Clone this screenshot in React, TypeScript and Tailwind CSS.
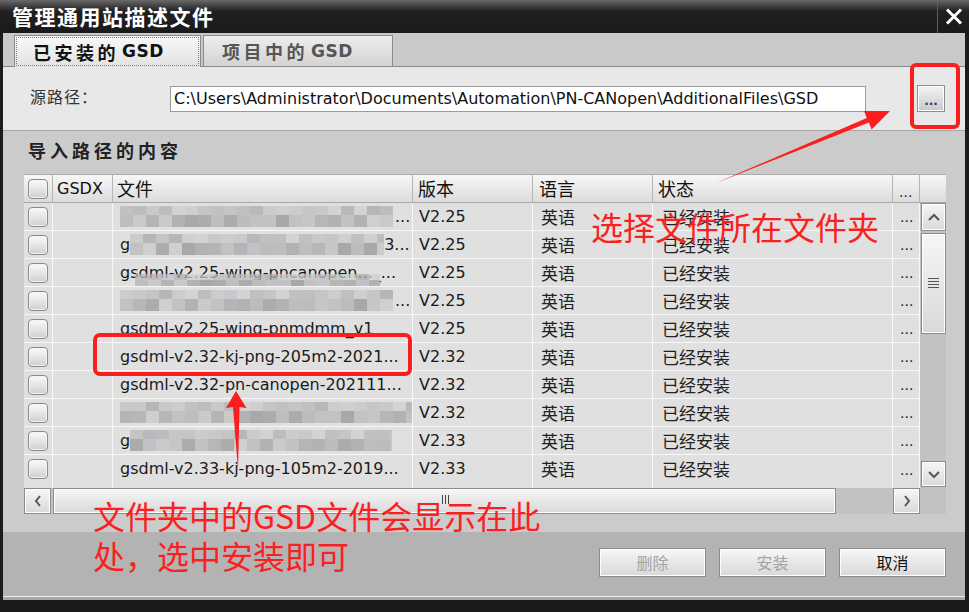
import React from "react";

const PAL = [
  "#c6c6c6", "#bcbcbc", "#b2b2b2", "#c2c2c2", "#acacac", "#cacaca",
  "#b9b7b4", "#bfc2c6", "#a8a8a8", "#bebebe", "#b5b5b5", "#cfcfcf",
];

function Mosaic({ w, seed, h1 = 9, h2 = 12 }: { w: number; seed: number; h1?: number; h2?: number }) {
  const n = Math.ceil(w / 13);
  const cells = (row: number) =>
    Array.from({ length: n }, (_, i) => PAL[(i * 7 + seed * 5 + row * 3 + ((i * i + seed) % 5)) % PAL.length]);
  return (
    <div className="inline-flex flex-col overflow-hidden blur-[0.6px] shrink-0" style={{ width: w }}>
      <div className="flex" style={{ height: h1 }}>
        {cells(0).map((c, i) => (
          <div key={i} className="w-[13px] shrink-0 opacity-75" style={{ background: c }} />
        ))}
      </div>
      <div className="flex" style={{ height: h2 }}>
        {cells(1).map((c, i) => (
          <div key={i} className="w-[13px] shrink-0" style={{ background: c }} />
        ))}
      </div>
    </div>
  );
}

function Check() {
  return (
    <div className="w-[20px] h-[20px] rounded-[4px] border-[1.5px] border-[#8a8a8a] bg-gradient-to-b from-[#fbfbfb] to-[#cfcfcf] shadow-[inset_0_0_0_1px_#f4f4f4]" />
  );
}

function SBtn({ children, className = "" }: { children?: React.ReactNode; className?: string }) {
  return (
    <div
      className={
        "border border-[#8c8c8c] bg-gradient-to-b from-[#f6f6f6] to-[#d9d9d9] shadow-[inset_0_0_0_1px_#ffffff] flex items-center justify-center " +
        className
      }
    >
      {children}
    </div>
  );
}

const GRID = "grid grid-cols-[29px_60px_300px_120px_120px_240px_27px]";

type Row = { file: React.ReactNode; ver: string };

const rows: Row[] = [
  { file: (<><Mosaic w={273} seed={1} /><span className="ml-[2px]">...</span></>), ver: "V2.25" },
  { file: (<><span>g</span><Mosaic w={254} seed={2} /><span>3...</span></>), ver: "V2.25" },
  {
    file: (
      <>
        <span>gsdml-v2.25-wing-pncanopen..._...</span>
        <div className="absolute left-[22px] top-[4px]">
          <Mosaic w={245} seed={3} h1={6} h2={8} />
        </div>
      </>
    ),
    ver: "V2.25",
  },
  { file: (<><Mosaic w={273} seed={4} /><span className="ml-[2px]">...</span></>), ver: "V2.25" },
  { file: <span>gsdml-v2.25-wing-pnmdmm_v1</span>, ver: "V2.25" },
  { file: <span>gsdml-v2.32-kj-png-205m2-2021...</span>, ver: "V2.32" },
  { file: <span>gsdml-v2.32-pn-canopen-202111...</span>, ver: "V2.32" },
  { file: <Mosaic w={293} seed={8} />, ver: "V2.32" },
  { file: (<><span>g</span><Mosaic w={262} seed={9} /></>), ver: "V2.33" },
  { file: <span>gsdml-v2.33-kj-png-105m2-2019...</span>, ver: "V2.33" },
];

export default function App() {
  return (
    <div className="relative w-[969px] h-[612px] bg-[#1b1b1b] overflow-hidden font-['DejaVu_Sans','Noto_Sans_CJK_SC',sans-serif]">
      {/* Title bar */}
      <div className="h-[33px] flex items-center bg-gradient-to-b from-[#6a6a6a] via-[#202020] via-[35%] to-[#1a1a1a]">
        <div className="pl-[12px] flex-1 text-white text-[21px] font-bold tracking-[1.5px] leading-none font-['Noto_Sans_CJK_SC',sans-serif]">
          管理通用站描述文件
        </div>
        <div className="w-[32px] h-[30px] self-end border-l border-[#5c5c5c] flex items-center justify-center pb-[3px]">
          <svg width="18" height="17" viewBox="0 0 18 17">
            <path d="M2 1.5 L16 15.5 M16 1.5 L2 15.5" stroke="#ffffff" strokeWidth="3" />
          </svg>
        </div>
      </div>

      {/* Window body */}
      <div className="ml-[3px] mr-[4px] h-[567px] flex flex-col">
        {/* Tab strip */}
        <div className="h-[34px] bg-[#c9c9c9] border-b border-[#8a8a8a] flex items-end pl-[11px] gap-[2px]">
          <div className="h-[32px] w-[187px] border border-b-0 border-[#8a8a8a] bg-gradient-to-b from-[#f8f8f8] to-[#e2e2e2] p-[1px] -mb-px">
            <div className="h-full border border-dotted border-[#6f80a8] flex items-center pl-[16px] text-[#111] font-bold">
              <span className="text-[18px] tracking-[3.5px] font-['Noto_Sans_CJK_SC',sans-serif] leading-none">已安装的</span>
              <span className="text-[17px] ml-[3px] leading-none tracking-[0.5px]">GSD</span>
            </div>
          </div>
          <div className="h-[31px] w-[190px] border border-b-0 border-[#8a8a8a] bg-gradient-to-b from-[#ededed] to-[#d3d3d3] flex items-center pl-[18px] text-[#555] font-bold">
            <span className="text-[18px] tracking-[3.5px] font-['Noto_Sans_CJK_SC',sans-serif] leading-none">项目中的</span>
            <span className="text-[17px] ml-[3px] leading-none tracking-[0.5px]">GSD</span>
          </div>
        </div>

        {/* Path row */}
        <div className="h-[64px] bg-[#e8e8e8] border-b border-[#a6a6a6] flex items-center">
          <div className="w-[167px] pl-[27px] pb-[5px] text-[16px] text-[#333] tracking-[1px] font-['Noto_Sans_CJK_SC',sans-serif]">源路径：</div>
          <div className="w-[696px] h-[26px] bg-white border border-[#9a9a9a] flex items-center pl-[3px] text-[16px] text-[#111] whitespace-nowrap overflow-hidden">
            C:\Users\Administrator\Documents\Automation\PN-CANopen\AdditionalFiles\GSD
          </div>
          <div className="ml-[51px] w-[28px] h-[27px] border border-[#8e8e8e] bg-gradient-to-b from-[#f4f4f4] to-[#c9c9c9] shadow-[inset_0_0_0_1px_#ffffff] flex items-end justify-center pb-[4px] text-[12px] leading-none text-[#2a3a66] font-bold">
            ...
          </div>
        </div>

        {/* Import content */}
        <div className="h-[401px] bg-[#cbcbcb] flex flex-col">
          <div className="h-[43px] flex items-center pl-[25px] pb-[5px] text-[18px] font-bold text-[#222] tracking-[4px] font-['Noto_Sans_CJK_SC',sans-serif]">
            导入路径的内容
          </div>
          <div className="ml-[21px] w-[922px]">
            {/* Header */}
            <div className="flex h-[29px] border-t border-b border-[#a8a8a8] bg-gradient-to-b from-[#f7f7f7] to-[#dcdcdc]">
              <div className={GRID + " w-[896px] h-full"}>
                <div className="border-r border-[#b6b6b6] flex items-center justify-center"><Check /></div>
                <div className="border-r border-[#b6b6b6] flex items-center pl-[4px] text-[16px] text-[#111]">GSDX</div>
                <div className="border-r border-[#b6b6b6] flex items-center pl-[4px] text-[18px] text-[#111] font-['Noto_Sans_CJK_SC',sans-serif]">文件</div>
                <div className="border-r border-[#b6b6b6] flex items-center pl-[5px] text-[18px] text-[#111] font-['Noto_Sans_CJK_SC',sans-serif]">版本</div>
                <div className="border-r border-[#b6b6b6] flex items-center pl-[6px] text-[18px] text-[#111] font-['Noto_Sans_CJK_SC',sans-serif]">语言</div>
                <div className="border-r border-[#b6b6b6] flex items-center pl-[5px] text-[18px] text-[#111] font-['Noto_Sans_CJK_SC',sans-serif]">状态</div>
                <div className="border-r border-[#b6b6b6] flex items-end pb-[3px] pl-[6px] text-[14px] leading-none text-[#222]">...</div>
              </div>
              <div className="w-[26px]" />
            </div>

            {/* Body */}
            <div className="flex h-[285px]">
              <div className="w-[896px] h-full bg-[#e0e0e0] flex flex-col">
                {rows.map((r, i) => (
                  <div
                    key={i}
                    className={GRID + (i < rows.length - 1 ? " h-[28px] shrink-0 border-b border-[#f7f7f7]" : " h-[28px] shrink-0")}
                  >
                    <div className="border-r border-[#f7f7f7] flex items-center justify-center"><Check /></div>
                    <div className="border-r border-[#f7f7f7]" />
                    <div className="border-r border-[#f7f7f7] relative flex items-center pl-[7px] overflow-hidden whitespace-nowrap text-[16px] text-[#1a1a1a]">
                      {r.file}
                    </div>
                    <div className="border-r border-[#f7f7f7] flex items-center pl-[6px] text-[16px] text-[#1a1a1a]">{r.ver}</div>
                    <div className="border-r border-[#f7f7f7] flex items-center pl-[8px] text-[17px] text-[#222] font-['Noto_Sans_CJK_SC',sans-serif]">英语</div>
                    <div className="border-r border-[#f7f7f7] flex items-center pl-[9px] text-[17px] text-[#222] font-['Noto_Sans_CJK_SC',sans-serif]">已经安装</div>
                    <div className="border-r border-[#f7f7f7] flex items-end pb-[6px] pl-[7px] text-[14px] leading-none text-[#222]">...</div>
                  </div>
                ))}
                <div className={GRID + " flex-1"}>
                  <div className="border-r border-[#f7f7f7]" />
                  <div className="border-r border-[#f7f7f7]" />
                  <div className="border-r border-[#f7f7f7]" />
                  <div className="border-r border-[#f7f7f7]" />
                  <div className="border-r border-[#f7f7f7]" />
                  <div className="border-r border-[#f7f7f7]" />
                  <div className="border-r border-[#f7f7f7]" />
                </div>
              </div>
              {/* Vertical scrollbar */}
              <div className="w-[26px] h-full bg-[#c2c2c2] flex flex-col">
                <SBtn className="ml-[1px] w-[25px] h-[28px]">
                  <svg width="16" height="14" viewBox="0 0 16 14"><polyline points="3,10 8,5 13,10" fill="none" stroke="#555" strokeWidth="2" /></svg>
                </SBtn>
                <SBtn className="ml-[1px] mt-[2px] w-[25px] h-[101px] relative">
                  <div className="absolute left-[6px] top-[44px] flex flex-col gap-[2px]">
                    <div className="w-[11px] h-px bg-[#555]" />
                    <div className="w-[11px] h-px bg-[#555]" />
                    <div className="w-[11px] h-px bg-[#555]" />
                    <div className="w-[11px] h-px bg-[#555]" />
                  </div>
                </SBtn>
                <SBtn className="ml-[1px] mt-auto w-[25px] h-[26px] mb-[1px]">
                  <svg width="16" height="14" viewBox="0 0 16 14"><polyline points="3,5 8,10 13,5" fill="none" stroke="#555" strokeWidth="2" /></svg>
                </SBtn>
              </div>
            </div>

            {/* Horizontal scrollbar */}
            <div className="h-[26px] bg-[#c2c2c2] flex">
              <SBtn className="w-[27px] h-full">
                <svg width="12" height="16" viewBox="0 0 12 16"><polyline points="8,3 4,8 8,13" fill="none" stroke="#555" strokeWidth="2" /></svg>
              </SBtn>
              <SBtn className="ml-[2px] w-[783px] h-full relative">
                <div className="absolute left-[388px] top-[6px] flex gap-[2px]">
                  <div className="w-px h-[9px] bg-[#444]" />
                  <div className="w-px h-[9px] bg-[#444]" />
                  <div className="w-px h-[9px] bg-[#444]" />
                </div>
              </SBtn>
              <SBtn className="ml-[57px] w-[27px] h-full">
                <svg width="12" height="16" viewBox="0 0 12 16"><polyline points="4,3 8,8 4,13" fill="none" stroke="#555" strokeWidth="2" /></svg>
              </SBtn>
            </div>
          </div>
        </div>

        {/* Footer */}
        <div className="h-[64px] bg-[#b3b3b3] flex justify-end items-start pt-[16px] pr-[19px] gap-[13px]">
          <div className="w-[107px] h-[29px] border border-[#8c8c8c] bg-gradient-to-b from-[#f7f7f7] to-[#d8d8d8] shadow-[inset_0_0_0_1px_#ffffff] flex items-center justify-center pb-[2px] text-[16px] text-[#a3a3a3] font-['Noto_Sans_CJK_SC',sans-serif]">删除</div>
          <div className="w-[107px] h-[29px] border border-[#8c8c8c] bg-gradient-to-b from-[#f7f7f7] to-[#d8d8d8] shadow-[inset_0_0_0_1px_#ffffff] flex items-center justify-center pb-[2px] text-[16px] text-[#a3a3a3] font-['Noto_Sans_CJK_SC',sans-serif]">安装</div>
          <div className="w-[107px] h-[29px] border border-[#8c8c8c] bg-gradient-to-b from-[#f7f7f7] to-[#d8d8d8] shadow-[inset_0_0_0_1px_#ffffff] flex items-center justify-center pb-[2px] text-[16px] text-[#111] font-['Noto_Sans_CJK_SC',sans-serif]">取消</div>
        </div>
        <div className="h-[1px] bg-[#ececec]" />
        <div className="h-[3px] bg-[#a6a6a6]" />
      </div>

      {/* Annotations */}
      <svg className="absolute left-0 top-0 pointer-events-none" width="969" height="612" viewBox="0 0 969 612">
        <rect x="912" y="65" width="46" height="62" rx="4" fill="none" stroke="#fa1e1e" strokeWidth="4" />
        <rect x="95" y="335" width="315" height="39" rx="5" fill="none" stroke="#fa1e1e" strokeWidth="4" />
        <polygon
          points="716,183 868.8,122.5 871.6,129.4 890,111 864,111 866.8,117.9"
          fill="#fa1e1e"
        />
        <polygon points="238,470 239.5,407 246.5,408 236,391 226,408 233,407" fill="#fa1e1e" />
      </svg>
      <div className="absolute left-[591px] top-[210px] text-[32px] leading-none text-[#fc1f1f] whitespace-nowrap font-['Noto_Sans_CJK_SC',sans-serif] pointer-events-none">
        选择文件所在文件夹
      </div>
      <div className="absolute left-[93px] top-[495px] text-[32px] leading-[40px] text-[#fc1f1f] whitespace-nowrap font-['Noto_Sans_CJK_SC',sans-serif] pointer-events-none">
        <div>文件夹中的GSD文件会显示在此</div>
        <div>处，选中安装即可</div>
      </div>
    </div>
  );
}
